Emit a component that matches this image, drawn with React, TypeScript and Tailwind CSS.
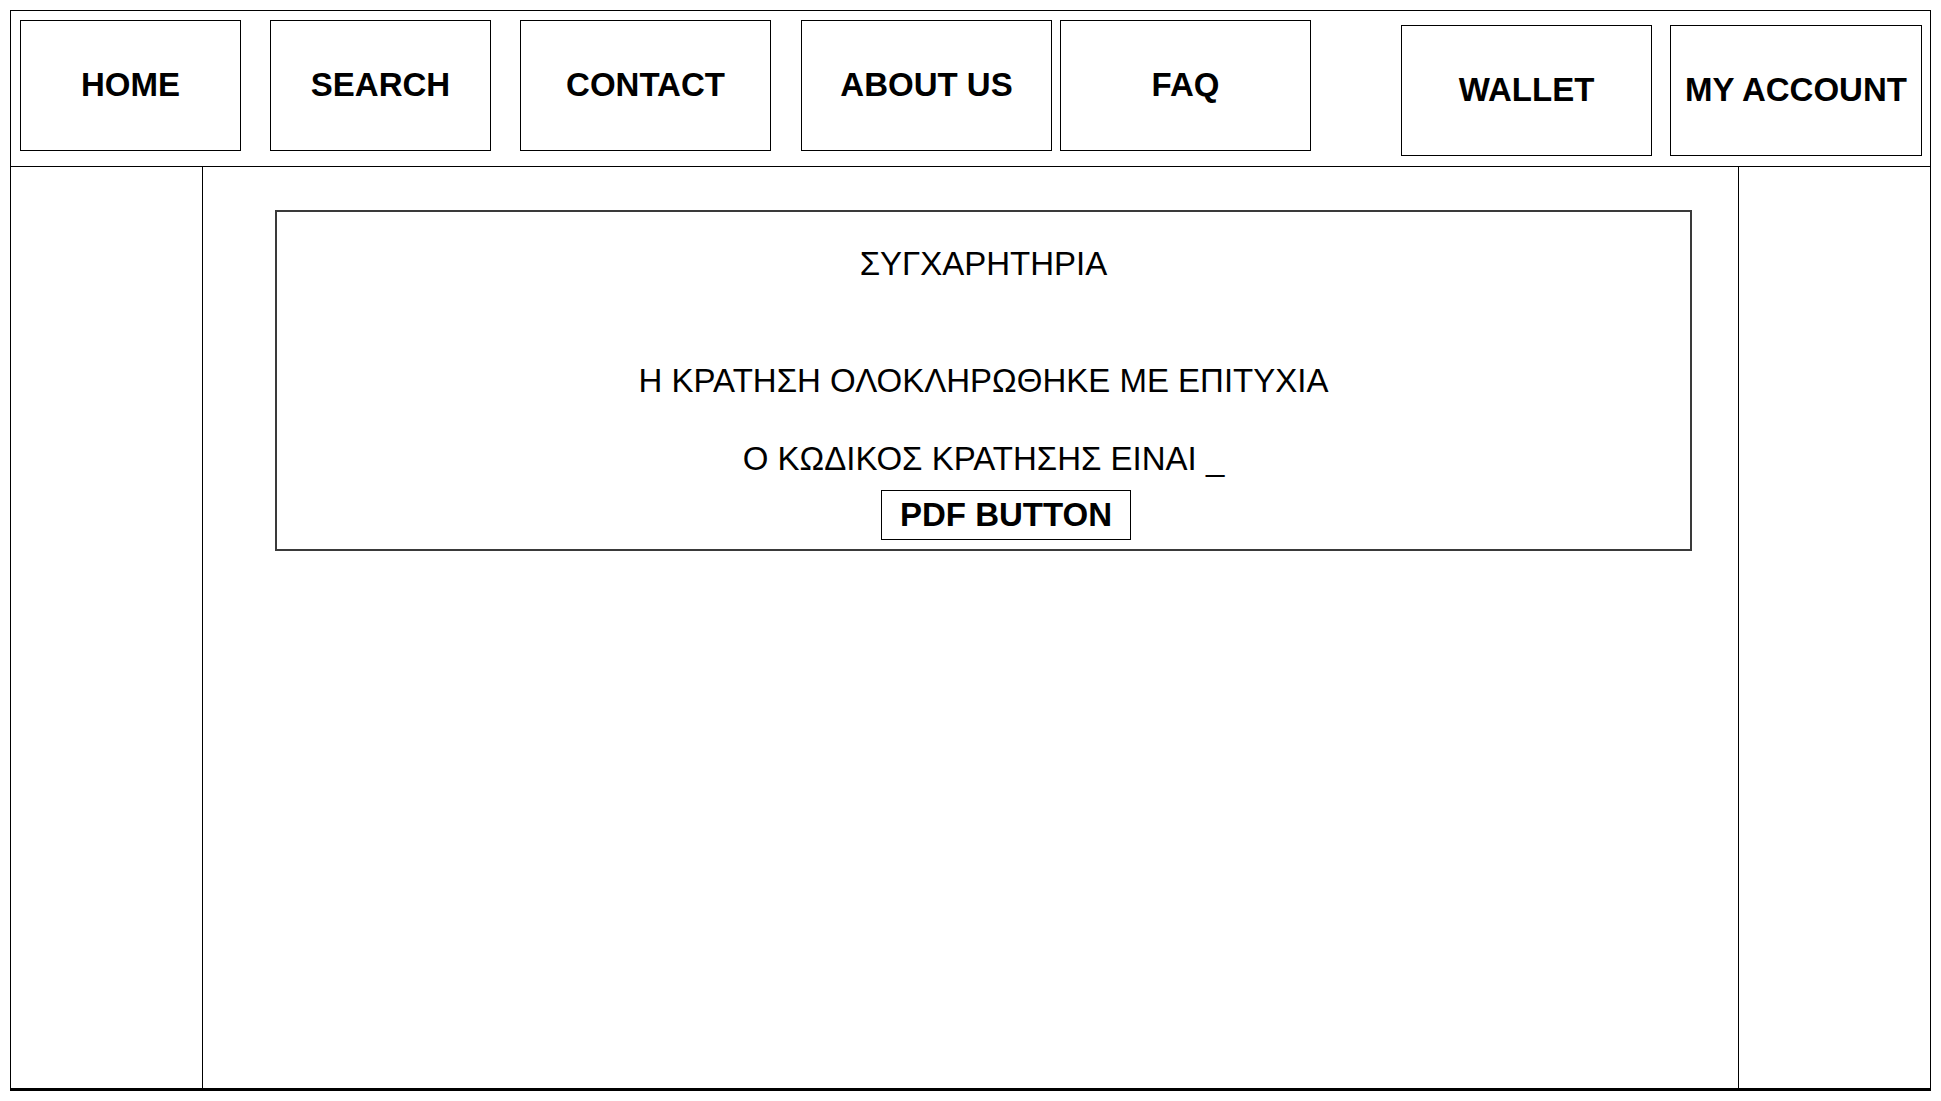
import React from "react";

const navLeft = [
  { label: "HOME", w: "w-[221px]", ml: "ml-[9px]" },
  { label: "SEARCH", w: "w-[221px]", ml: "ml-[29px]" },
  { label: "CONTACT", w: "w-[251px]", ml: "ml-[29px]" },
  { label: "ABOUT US", w: "w-[251px]", ml: "ml-[30px]" },
  { label: "FAQ", w: "w-[251px]", ml: "ml-[8px]" },
];

function NavBox({ label, w, ml, extra }: { label: string; w: string; ml: string; extra?: string }) {
  return (
    <div
      className={`${w} ${ml} ${extra ?? ""} h-[131px] shrink-0 border border-black flex items-center justify-center pb-[2px] text-[33px] leading-[33px] font-bold text-black`}
    >
      {label}
    </div>
  );
}

export default function App() {
  return (
    <div className="w-[1941px] h-[1101px] bg-white" style={{ fontFamily: '"Liberation Sans", Arial, sans-serif' }}>
      <div className="ml-[10px] mt-[10px] w-[1921px] h-[1081px] border border-black border-b-[3px] flex flex-col">
        <div className="h-[156px] shrink-0 border-b border-black flex items-start pt-[9px]">
          {navLeft.map((n) => (
            <NavBox key={n.label} label={n.label} w={n.w} ml={n.ml} />
          ))}
          <NavBox label="WALLET" w="w-[251px]" ml="ml-[90px]" extra="mt-[5px]" />
          <NavBox label="MY ACCOUNT" w="w-[252px]" ml="ml-[18px]" extra="mt-[5px]" />
        </div>
        <div className="flex flex-1">
          <div className="w-[192px] shrink-0 border-r border-black" />
          <div className="flex-1 pt-[43px]">
            <div className="ml-[72px] w-[1417px] h-[341px] border-2 border-[#3a3a3a] flex flex-col items-center pt-[35px] text-black text-[33px] leading-[33px]">
              <div>ΣΥΓΧΑΡΗΤΗΡΙΑ</div>
              <div className="mt-[84px]">Η ΚΡΑΤΗΣΗ ΟΛΟΚΛΗΡΩΘΗΚΕ ΜΕ ΕΠΙΤΥΧΙΑ</div>
              <div className="mt-[45px]">Ο ΚΩΔΙΚΟΣ ΚΡΑΤΗΣΗΣ ΕΙΝΑΙ _</div>
              <div className="mt-[15px] ml-[45px] w-[250px] border border-black pt-[7px] pb-[8px] text-center font-bold">
                PDF BUTTON
              </div>
            </div>
          </div>
          <div className="w-[192px] shrink-0 border-l border-black" />
        </div>
      </div>
    </div>
  );
}
